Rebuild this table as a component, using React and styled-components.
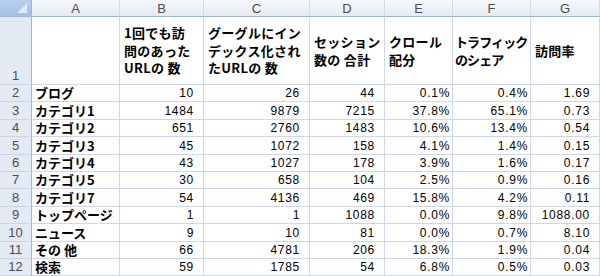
import styled, { createGlobalStyle } from 'styled-components'

const GlobalStyle = createGlobalStyle`
  html, body {
    margin: 0;
    padding: 0;
    background: #ffffff;
    overflow: hidden;
  }
`

const Sheet = styled.div`
  width: 600px;
  height: 276px;
  overflow: hidden;
  display: grid;
  grid-template-columns: 32px 88px 84px 106px 75px 68px 78px 1fr;
  grid-template-rows: 17px 68px repeat(11, 17.4px);
  font-family: "Noto Sans CJK JP", "Liberation Sans", sans-serif;
  color: #000;
`

const Corner = styled.div`
  box-sizing: border-box;
  background: linear-gradient(#b9cfee, #a6c0e6);
  border-right: 1px solid #9eb6ce;
  border-bottom: 1px solid #9eb6ce;
  position: relative;
  svg {
    position: absolute;
    right: 4px;
    bottom: 3px;
  }
`

const ColHead = styled.div`
  box-sizing: border-box;
  background: linear-gradient(#f6f8fb, #e6ebf2);
  border-right: 1px solid #d2dae6;
  border-bottom: 1px solid #9eb6ce;
  display: flex;
  align-items: center;
  justify-content: center;
  font-family: "Liberation Sans", Arial, sans-serif;
  font-size: 13px;
  color: #4d4d4d;
`

const RowHead = styled.div`
  box-sizing: border-box;
  background: #e4eaf3;
  border-right: 1px solid #9eb6ce;
  border-bottom: 1px solid #c9d5e5;
  display: flex;
  align-items: flex-end;
  justify-content: center;
  padding-bottom: 1px;
  font-family: "Liberation Sans", Arial, sans-serif;
  font-size: 13px;
  line-height: 15px;
  color: #4d4d4d;
`

const Cell = styled.div`
  box-sizing: border-box;
  min-width: 0;
  border-right: 1px solid #d0d7e5;
  border-bottom: 1px solid #d0d7e5;
  display: flex;
  align-items: flex-end;
  justify-content: ${p => (p.$num ? 'flex-end' : 'flex-start')};
  padding: 0 ${p => (p.$num ? p.$pad : 0)}px 1px ${p => (p.$num ? 0 : 3)}px;
  white-space: nowrap;
`

const Label = styled.span`
  font-size: 13px;
  font-weight: 700;
  line-height: 15px;
`

const Num = styled.span`
  font-family: "Liberation Sans", Arial, sans-serif;
  font-size: 12px;
  letter-spacing: 0.7px;
  line-height: 14px;
`

const HeadCell = styled(Cell)`
  align-items: center;
  padding: 0 0 0 ${p => (p.$tight ? 2 : 4)}px;
  font-size: 13px;
  font-weight: 700;
  line-height: 17.5px;
  letter-spacing: ${p => (p.$tight ? '-0.9px' : '0.3px')};
`

const letters = ['A', 'B', 'C', 'D', 'E', 'F', 'G']

const titles = [
  [],
  ['1回でも訪', '問のあった', 'URLの 数'],
  ['グーグルにイン', 'デックス化され', 'たURLの 数'],
  ['セッション', '数の 合計'],
  ['クロール', '配分'],
  ['トラフィック', 'のシェア'],
  ['訪問率'],
]

const rows = [
  ['ブログ', '10', '26', '44', '0.1%', '0.4%', '1.69'],
  ['カテゴリ1', '1484', '9879', '7215', '37.8%', '65.1%', '0.73'],
  ['カテゴリ2', '651', '2760', '1483', '10.6%', '13.4%', '0.54'],
  ['カテゴリ3', '45', '1072', '158', '4.1%', '1.4%', '0.15'],
  ['カテゴリ4', '43', '1027', '178', '3.9%', '1.6%', '0.17'],
  ['カテゴリ5', '30', '658', '104', '2.5%', '0.9%', '0.16'],
  ['カテゴリ7', '54', '4136', '469', '15.8%', '4.2%', '0.11'],
  ['トップページ', '1', '1', '1088', '0.0%', '9.8%', '1088.00'],
  ['ニュース', '9', '10', '81', '0.0%', '0.7%', '8.10'],
  ['その 他', '66', '4781', '206', '18.3%', '1.9%', '0.04'],
  ['検索', '59', '1785', '54', '6.8%', '0.5%', '0.03'],
]

// percent columns have no trailing space in their number format
const pads = [0, 9, 9, 9, 2, 2, 9]

export default function App() {
  return (
    <>
      <GlobalStyle />
      <Sheet>
        <Corner>
          <svg width="10" height="10" viewBox="0 0 10 10">
            <polygon points="10,0 10,10 0,10" fill="#e2eaf6" />
          </svg>
        </Corner>
        {letters.map(l => (
          <ColHead key={l}>{l}</ColHead>
        ))}

        <RowHead>1</RowHead>
        {titles.map((t, i) => (
          <HeadCell key={i} $tight={i === 5}>
            <div>
              {t.map((line, j) => (
                <div key={j}>{line}</div>
              ))}
            </div>
          </HeadCell>
        ))}

        {rows.map((r, i) => (
          <Row key={i} n={i + 2} cells={r} />
        ))}
      </Sheet>
    </>
  )
}

function Row({ n, cells }) {
  return (
    <>
      <RowHead>{n}</RowHead>
      {cells.map((c, i) =>
        i === 0 ? (
          <Cell key={i}>
            <Label>{c}</Label>
          </Cell>
        ) : (
          <Cell key={i} $num $pad={pads[i]}>
            <Num>{c}</Num>
          </Cell>
        )
      )}
    </>
  )
}
